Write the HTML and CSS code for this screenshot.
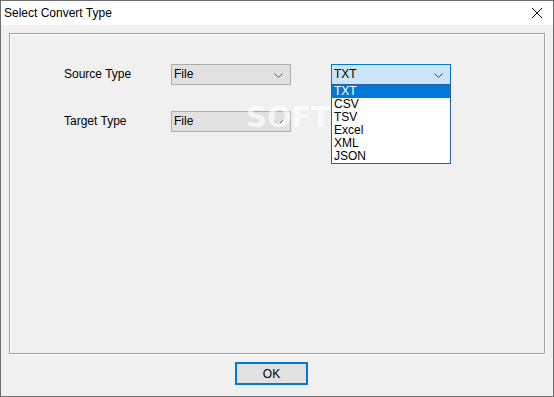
FILE: index.html
```html
<!DOCTYPE html>
<html>
<head>
<meta charset="utf-8">
<link rel="stylesheet" href="styles.css">
</head>
<body>
<div class="window">
  <div class="titlebar">
    <span class="title">Select Convert Type</span>
    <svg class="close" width="12" height="12" viewBox="0 0 12 12"><path d="M1 1L11 11M11 1L1 11" stroke="#000" stroke-width="1" fill="none"/></svg>
  </div>
  <div class="content">
    <div class="group">
      <div class="form">
        <div class="label">Source Type</div>
        <div class="combo"><span>File</span><svg class="chev" width="9" height="5" viewBox="0 0 9 5"><path d="M0.5 0.5L4.5 4.5L8.5 0.5" stroke="#606060" fill="none"/></svg></div>
        <div class="combo-wrap">
          <div class="combo active"><span>TXT</span><svg class="chev" width="9" height="5" viewBox="0 0 9 5"><path d="M0.5 0.5L4.5 4.5L8.5 0.5" stroke="#404040" fill="none"/></svg></div>
          <ul class="list">
            <li class="sel">TXT</li>
            <li>CSV</li>
            <li>TSV</li>
            <li>Excel</li>
            <li>XML</li>
            <li>JSON</li>
          </ul>
        </div>
        <div class="label">Target Type</div>
        <div class="combo"><span>File</span><svg class="chev" width="9" height="5" viewBox="0 0 9 5"><path d="M0.5 0.5L4.5 4.5L8.5 0.5" stroke="#606060" fill="none"/></svg></div>
      </div>
      <div class="watermark">SOFTPEDIA<sup>®</sup></div>
    </div>
    <div class="footer">
      <button class="ok">OK</button>
    </div>
  </div>
</div>
</body>
</html>
```
FILE: styles.css
```css
* { box-sizing: border-box; }
html, body { margin: 0; padding: 0; }
body {
  width: 554px;
  height: 397px;
  font-family: "Liberation Sans", Arial, sans-serif;
  font-size: 12px;
  color: #000;
}
.window {
  width: 554px;
  height: 397px;
  border: 1px solid #6e6e6e;
  background: #f0f0f0;
  display: flex;
  flex-direction: column;
}
.titlebar {
  height: 24px;
  background: #fff;
  display: flex;
  align-items: center;
  justify-content: space-between;
  padding: 0 9px 0 3px;
}
.title {
  font-size: 12px;
  line-height: 24px;
}
.close { display: block; margin-right: 1px; margin-top: -1px; }
.content {
  flex: 1;
  padding: 8px 8px 0 8px;
  display: flex;
  flex-direction: column;
}
.group {
  position: relative;
  height: 321px;
  border: 1px solid #a0a0a0;
  box-shadow: inset 1px 1px 0 #fff, 1px 1px 0 #fff;
  padding: 30px 0 0 54px;
}
.form {
  display: grid;
  grid-template-columns: 67px 120px 120px;
  grid-auto-rows: 21px;
  column-gap: 40px;
  row-gap: 26px;
  align-items: center;
}
.label {
  font-size: 12px;
  padding-bottom: 2px;
  white-space: nowrap;
}
.combo {
  height: 21px;
  border: 1px solid #adadad;
  background: #e1e1e1;
  display: flex;
  align-items: center;
  justify-content: space-between;
  padding: 0 7px 0 2px;
}
.combo span { line-height: 19px; }
.combo.active {
  border-color: #0078d7;
  background: #cce4f7;
}
.chev { display: block; margin-top: 1px; }
.combo-wrap { position: relative; height: 21px; }
.list {
  position: absolute;
  top: 20px;
  left: 0;
  width: 120px;
  margin: 0;
  padding: 0;
  list-style: none;
  background: #fff;
  border: 1px solid #2a5ea8;
  z-index: 2;
}
.list li {
  height: 13px;
  line-height: 13px;
  padding-left: 2px;
}
.list li.sel {
  background: #0078d7;
  color: #fff;
}
.watermark {
  position: absolute;
  left: 236px;
  top: 66px;
  font-family: "DejaVu Sans", sans-serif;
  font-weight: bold;
  font-size: 29px;
  letter-spacing: 0px;
  color: rgba(255, 255, 255, 0.7);
  z-index: 1;
  pointer-events: none;
}
.watermark sup { font-size: 9px; vertical-align: top; }
.footer {
  padding: 8px 0 0 226px;
}
.ok {
  width: 73px;
  height: 23px;
  border: 2px solid #0078d7;
  background: #e1e1e1;
  font-family: "Liberation Sans", Arial, sans-serif;
  font-size: 12px;
  padding: 0;
  color: #000;
  display: block;
}
```
